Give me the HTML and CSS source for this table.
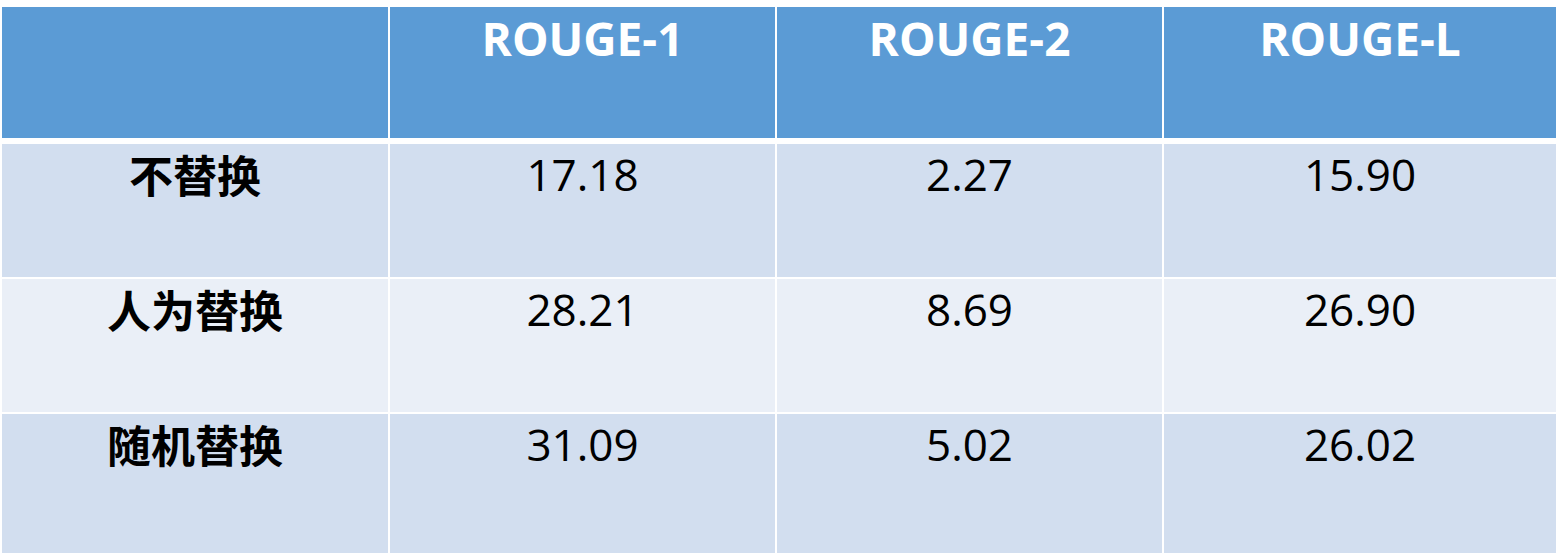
FILE: index.html
```html
<!DOCTYPE html>
<html lang="zh-CN">
<head>
    <meta charset="UTF-8">
    <meta name="viewport" content="width=device-width, initial-scale=1.0">
    <title>ROUGE</title>
    <link rel="stylesheet" href="styles.css">
</head>
<body>
    <div class="score-table">
        <div class="cell head"></div>
        <div class="cell head">ROUGE-1</div>
        <div class="cell head">ROUGE-2</div>
        <div class="cell head">ROUGE-L</div>

        <div class="cell odd label">不替换</div>
        <div class="cell odd">17.18</div>
        <div class="cell odd">2.27</div>
        <div class="cell odd">15.90</div>

        <div class="cell even label">人为替换</div>
        <div class="cell even">28.21</div>
        <div class="cell even">8.69</div>
        <div class="cell even">26.90</div>

        <div class="cell odd label">随机替换</div>
        <div class="cell odd">31.09</div>
        <div class="cell odd">5.02</div>
        <div class="cell odd">26.02</div>
    </div>
</body>
</html>
```

FILE: styles.css
```css
body {
    margin: 0;
    padding: 0;
    background-color: #fff;
    font-family: "Open Sans", "Noto Sans CJK SC", sans-serif;
    overflow: hidden;
}

.score-table {
    display: grid;
    grid-template-columns: 386px 385px 385px 1fr;
    grid-template-rows: 135px 133px 133px 140px;
    column-gap: 2px;
    row-gap: 2px;
    margin: 7px 0 0 2px;
}

.cell {
    text-align: center;
    font-size: 44px;
    line-height: 60px;
    color: #000;
}

/* header cells are shorter than their track, leaving the thick white rule */
.head {
    background-color: #5b9bd5;
    color: #fff;
    font-size: 46px;
    line-height: 62px;
    font-weight: bold;
    height: 131px;
}

.odd {
    background-color: #d2deef;
}

.even {
    background-color: #eaeff7;
}

.label {
    font-family: "Noto Sans CJK SC", sans-serif;
    font-weight: bold;
    font-size: 44px;
}
```
